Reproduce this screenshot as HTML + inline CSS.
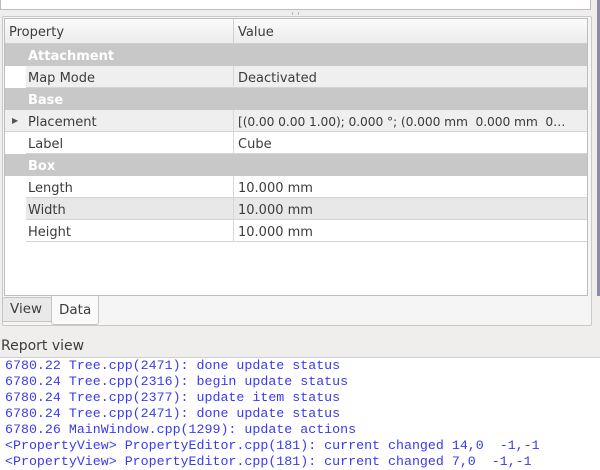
<!DOCTYPE html>
<html><head><meta charset="utf-8"><style>
*{margin:0;padding:0;box-sizing:border-box}
body{width:600px;height:470px;background:#efeeed;position:relative;overflow:hidden;font-family:"DejaVu Sans","Liberation Sans",sans-serif;font-size:13px;color:#3c3c3c}
.abs{position:absolute;white-space:nowrap}
.row{position:absolute;left:21px;width:561px;height:22px;border-bottom:1px solid #d4d4d4;white-space:nowrap}
.row span{position:absolute;top:5px}
.p{left:2px}.v{left:212px}
.row .d{position:absolute;left:207px;top:0;width:1px;height:22px;background:#d8d8d8}
.grp{left:0;width:582px;background:#c8c8c8;color:#fff;font-weight:bold;border-bottom:none}
.grp .p{left:23px}
.log{position:absolute;left:0;top:358px;width:600px;height:112px;background:#fff;font-family:"Liberation Mono",monospace;font-size:13.3px;color:#3a3af0;line-height:16px;padding-left:5px;white-space:pre}
</style></head><body>
<div class="abs" style="left:0;top:0;width:591px;height:10px;background:#fff;border:1px solid #bdbdbd;border-top:none"></div>
<div class="abs" style="left:292px;top:12px;width:7px;height:3px;border-left:1px solid #bbb;border-right:1px solid #bbb"></div>
<div class="abs" style="left:597px;top:0;width:3px;height:296px;background:#8c8ca8"></div>
<div class="abs" style="left:2px;top:16px;width:590px;height:310px;border:1px solid #c9c9c9;border-radius:2px;background:#f5f5f5"></div>
<div class="abs" style="left:4px;top:18px;width:584px;height:278px;border:1px solid #bdbdbd;background:#fff;overflow:hidden">
 <div class="abs" style="left:0;top:0;width:582px;height:25px;background:linear-gradient(#fbfbfb,#ececec);border-bottom:1px solid #cfcfcf"></div>
 <div class="abs" style="left:228px;top:0;width:1px;height:25px;background:#d0d0d0"></div>
 <div class="abs" style="left:4px;top:6px">Property</div>
 <div class="abs" style="left:233px;top:6px">Value</div>
 <div class="row grp" style="top:25px"><span class="p">Attachment</span></div>
 <div class="row" style="top:47px;background:#efefef"><span class="p">Map Mode</span><i class="d"></i><span class="v">Deactivated</span></div>
 <div class="row grp" style="top:69px"><span class="p">Base</span></div>
 <div class="row" style="top:91px;background:#efefef;left:0;width:582px"><span style="left:7px;top:6px;font-size:8px;color:#555">▶</span><span style="left:23px">Placement</span><i class="d" style="left:228px"></i><span style="left:233px;font-size:12.3px;letter-spacing:-0.1px">[(0.00 0.00 1.00); 0.000 °; (0.000 mm&nbsp; 0.000 mm&nbsp; 0…</span></div>
 <div class="row" style="top:113px"><span class="p">Label</span><i class="d"></i><span class="v">Cube</span></div>
 <div class="row grp" style="top:135px"><span class="p">Box</span></div>
 <div class="row" style="top:157px"><span class="p">Length</span><i class="d"></i><span class="v">10.000 mm</span></div>
 <div class="row" style="top:179px;background:#e8e8e8"><span class="p">Width</span><i class="d"></i><span class="v">10.000 mm</span></div>
 <div class="row" style="top:201px"><span class="p">Height</span><i class="d"></i><span class="v">10.000 mm</span></div>
</div>
<div class="abs" style="left:2px;top:297px;width:50px;height:25px;background:#e9e9e9;border:1px solid #c4c4c4;border-radius:3px 3px 0 0;padding:3px 0 0 7px;font-size:13.5px">View</div>
<div class="abs" style="left:51px;top:296px;width:48px;height:29px;background:#fafafa;border:1px solid #c4c4c4;border-top:none;border-radius:0 0 3px 3px;padding:6px 0 0 7px;font-size:13.5px">Data</div>
<div class="abs" style="left:1px;top:338px;font-size:14px;color:#3c3c3c">Report view</div>
<div class="abs" style="left:0;top:357px;width:600px;height:1px;background:#d0d0d0"></div>
<div class="log">6780.22 Tree.cpp(2471): done update status
6780.24 Tree.cpp(2316): begin update status
6780.24 Tree.cpp(2377): update item status
6780.24 Tree.cpp(2471): done update status
6780.26 MainWindow.cpp(1299): update actions
&lt;PropertyView&gt; PropertyEditor.cpp(181): current changed 14,0  -1,-1
&lt;PropertyView&gt; PropertyEditor.cpp(181): current changed 7,0  -1,-1</div>
</body></html>
